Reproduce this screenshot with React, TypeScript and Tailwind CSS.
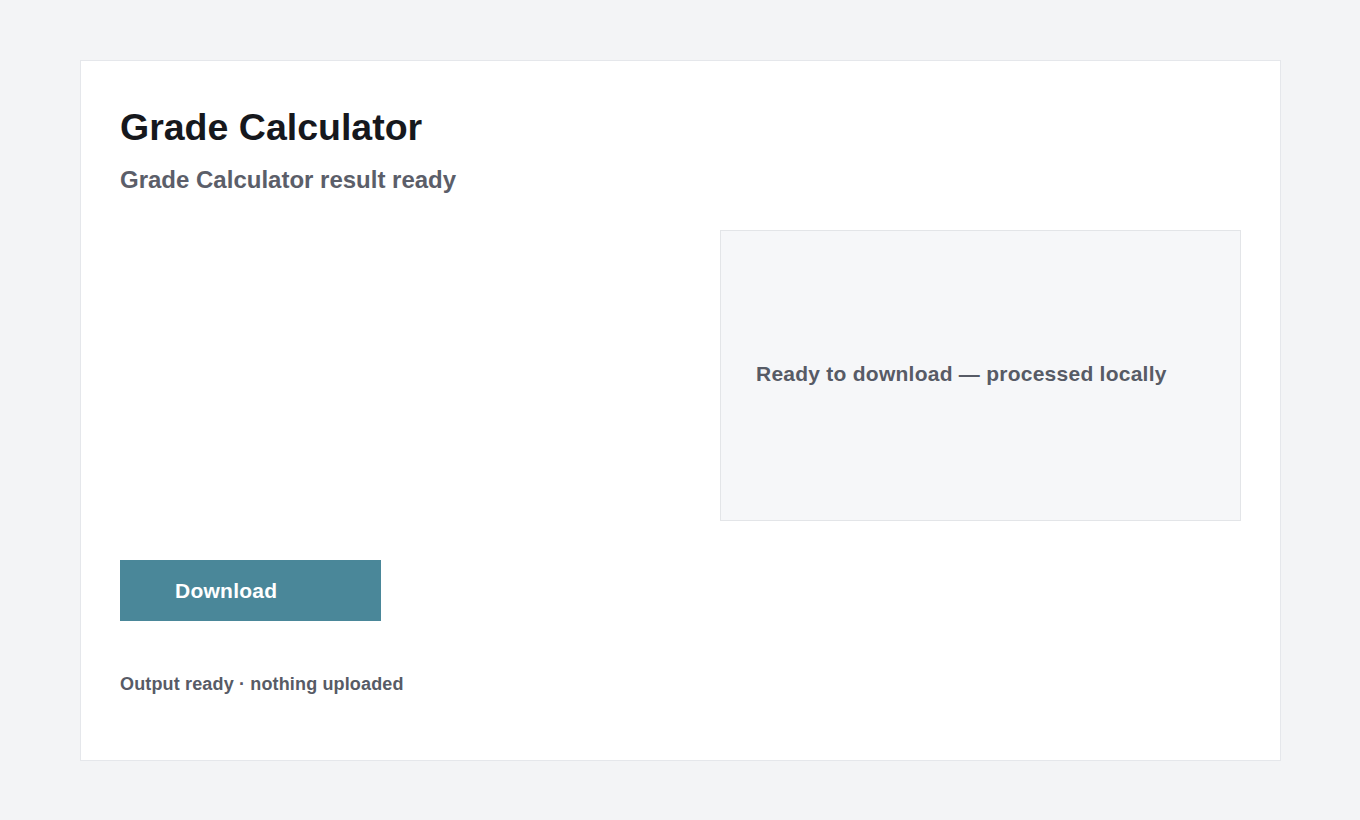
export default function App() {
  return (
    <div className="min-h-screen bg-[#f3f4f6] pt-[60px] font-['Liberation_Sans',Arial,sans-serif]">
      <div className="ml-[80px] w-[1201px] border border-[#e5e7eb] bg-white px-[39px] pt-[39px] pb-[62px]">
        <h1 className="text-[37.5px] font-bold leading-[54px] text-[#16181d]">Grade Calculator</h1>
        <p className="mt-[10px] text-[24px] font-bold leading-[32px] text-[#5b5e69]">
          Grade Calculator result ready
        </p>

        <div className="mt-[34px] grid grid-cols-[560px_521px] gap-[40px]">
          <div />
          <div className="flex h-[291px] items-center border border-[#e3e5e8] bg-[#f6f7f9] px-[35px] pb-[4px]">
            <span className="text-[21px] font-bold tracking-[0.25px] text-[#575b66]">
              Ready to download — processed locally
            </span>
          </div>
        </div>

        <button className="mt-[39px] flex h-[61px] w-[261px] items-center bg-[#4a8799] pl-[55px] text-[21px] font-bold tracking-[0.25px] text-white">
          Download
        </button>

        <p className="mt-[49px] text-[18px] font-bold leading-[28px] tracking-[0.15px] text-[#575b66]">
          Output ready · nothing uploaded
        </p>
      </div>
    </div>
  );
}
